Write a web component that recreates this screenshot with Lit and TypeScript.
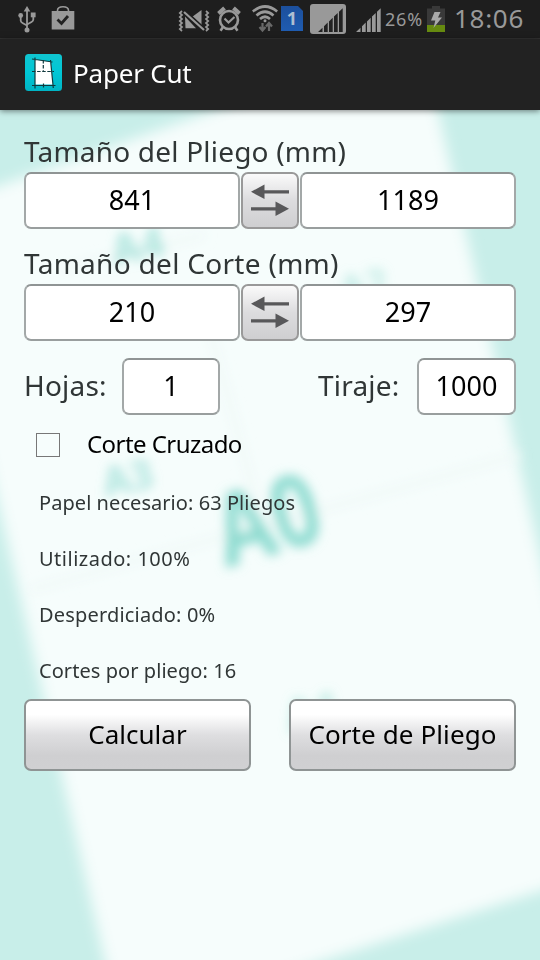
import { LitElement, html, css, svg } from "lit";
import { customElement, state } from "lit/decorators.js";

const usb = svg`<svg width="18" height="28" viewBox="0 0 18 28" fill="#9a9a9a" stroke="#9a9a9a" stroke-width="1.8">
  <path d="M9 0l3.300 5.500H5.700z" stroke="none"/><path d="M9 4v20M2.700 11v3.500Q2.700 16 4.500 17L9 19.500M15.300 10v3.500Q15.300 15 13.500 16L9 18.500" fill="none"/>
  <circle cx="9" cy="24" r="2.500" stroke="none"/><circle cx="2.700" cy="9.500" r="2.400" stroke="none"/><rect x="12.800" y="6.500" width="4.800" height="4.800" stroke="none"/></svg>`;
const bag = svg`<svg width="24" height="26" viewBox="0 0 24 26"><path d="M6.500 6.500V4.500q0-3.700 5.500-3.700t5.500 3.700v2" fill="none" stroke="#999" stroke-width="1.600"/>
  <path d="M.7 5h22.600v18.500H.7z" fill="#999"/><path d="M6.500 13.500l4 4 6.500-7.500" fill="none" stroke="#222" stroke-width="2.800"/></svg>`;
const vibrate = svg`<svg width="32" height="24" viewBox="0 0 32 24" fill="#999"><path d="M7 7.500L18 19.300H7.500z"/><path d="M14 8l9.500-7v15.500z"/><path d="M7 1.500l20 18.500" stroke="#1e1e1e" stroke-width="2"/><path d="M6 3l20 18" fill="none" stroke="#999" stroke-width="2.200"/>
  <path d="M4 2l-2.200 2 2.200 2-2.200 2L4 10l-2.200 2L4 14l-2.200 2L4 18l-2.200 2L4 22M28 2l2.200 2L28 6l2.200 2-2.200 2 2.200 2-2.200 2 2.200 2-2.200 2 2.200 2-2.200 2" fill="none" stroke="#999" stroke-width="1.700"/></svg>`;
const alarm = svg`<svg width="24" height="26" viewBox="0 0 24 26" fill="none" stroke="#999"><circle cx="12" cy="14" r="9" stroke-width="2.600"/><path d="M7.500 12.500l4 4 6-5.500" stroke-width="2.200"/>
  <path d="M1.500 7.500L7.500 2M22.500 7.500L16.500 2" stroke-width="4"/><path d="M6 21l-2.500 3.700M18 21l2.500 3.700" stroke-width="2.500"/></svg>`;
const wifi = svg`<svg width="26" height="28" viewBox="0 0 26 28" fill="none" stroke="#999" stroke-width="2.700"><path d="M.8 6.500Q13-3.500 25.200 6.500M4.500 10.500Q13 3 21.500 10.500M8 14Q13 9.500 18 14"/><circle cx="13" cy="15.800" r="1.500" fill="#999" stroke="none"/>
  <path d="M10.500 18v7M7.500 22l3 3.500 3-3.500M17 26v-7M14 21.500l3-3.500 3 3.500" stroke="#696969" stroke-width="2.200"/></svg>`;
const bars = (c: string) => svg`<svg width="25" height="24" viewBox="0 0 25 24" fill=${c}>
  <path d="M0 24l4.500-4.300V24zM6 24v-5.800l3.700-3.600V24zM11 24V13.400l3.700-3.600V24zM16 24V8.600l3.700-3.600V24zM21 24V3.800L24.700.2V24z"/></svg>`;
const battery = svg`<svg width="18" height="26" viewBox="0 0 18 26"><path d="M5 0h8v2.500h5V26H0V2.500h5z" fill="#393939"/><path d="M0 19h18v7H0z" fill="#668a10"/><path d="M7.500 6h6l-2.500 5.500h4L6.500 22l1.800-7.500H4z" fill="#aaa"/></svg>`;
const logo = svg`<svg width="37" height="37" viewBox="0 0 37 37"><defs><linearGradient id="cy" x2="0" y2="1"><stop offset="0" stop-color="#10c5d0"/><stop offset=".5" stop-color="#00c7d6"/><stop offset="1" stop-color="#00b4c4"/></linearGradient></defs>
  <rect width="37" height="37" rx="3.500" fill="url(#cy)"/><path d="M10 5.500L25.800 7.800 28 30.500H10z" fill="#fff"/>
  <g stroke="#10383d" stroke-width="1.200" fill="none"><path d="M7 5l20.500 3M10 3.500v31M25.500 6l2.800 28M7 31.500h23.500M18.500 29.500v4"/><path d="M7 17.500h22M18.300 6v11" stroke-dasharray="3.500 1.600"/></g></svg>`;
const arrows = svg`<svg width="38" height="34" viewBox="0 0 38 34" fill="#58585a"><path d="M0 8.800L13.500 1.500v5.700H38v3.200H13.500V16zM38 25.800L24.500 18.500v5.700H0v3.200h24.500V33z"/></svg>`;

@customElement("paper-backdrop")
class PaperBackdrop extends LitElement {
  static styles = css`
    :host { display: block; }
    svg { display: block; }
    text { font-family: "Noto Sans", sans-serif; font-weight: 700; fill: #8edbd0; }
  `;
  render() {
    return html`<svg width="540" height="850" viewBox="0 110 540 850">
      <defs>
        <filter id="soft" x="-10%" y="-10%" width="120%" height="120%"><feGaussianBlur stdDeviation="7"/></filter>
        <filter id="ink" x="-40%" y="-40%" width="180%" height="180%"><feGaussianBlur stdDeviation="5.500"/></filter>
      </defs>
      <rect y="110" width="540" height="850" fill="#c8eee9"/>
      <path filter="url(#soft)" fill="#f6fdfc" d="M-70 210L421 38 612 868 120 1026z"/>
      <g filter="url(#ink)">
        <path d="M30 590L520 455M210 330L260 515M60 270L205 235" stroke="#f0f9f8" stroke-width="7" fill="none"/>
        <text transform="translate(226 568) rotate(-16)" font-size="100" textLength="106" lengthAdjust="spacingAndGlyphs">A0</text>
        <text transform="translate(115 266) rotate(-12)" font-size="42" opacity=".75">A4</text>
        <text transform="translate(106 497) rotate(-12)" font-size="40" opacity=".7">A3</text>
        <text transform="translate(343 304) rotate(-12)" font-size="38" opacity=".5">A2</text>
        <text transform="translate(289 733) rotate(-12)" font-size="44" opacity=".5">A1</text>
      </g>
    </svg>`;
  }
}

@customElement("app-root")
class AppRoot extends LitElement {
  @state() private sizes = [
    { cls: "l1", label: "Tamaño del Pliego (mm)", a: "841", b: "1189" },
    { cls: "l2", label: "Tamaño del Corte (mm)", a: "210", b: "297" },
  ];
  @state() private results = ["Papel necesario: 63 Pliegos", "Utilizado: 100%", "Desperdiciado: 0%", "Cortes por pliego: 16"];

  static styles = css`
    :host { display: flex; flex-direction: column; width: 540px; height: 960px; overflow: hidden; font-family: "Noto Sans", sans-serif; color: #000; }
    * { box-sizing: border-box; }
    svg { display: block; flex: none; }
    .status { height: 39px; flex: none; background: #1e1e1e; border-bottom: 1px solid #333; display: flex; align-items: flex-start; padding: 6px 0 0 18px; color: #999; }
    .status > * { flex: none; }
    .bag { margin-left: 15px; }
    .vib { margin: 3px 0 0 103px; }
    .alarm { margin-left: 7px; }
    .wifi { margin-left: 11px; margin-top: -1px; }
    .sim { width: 22px; height: 25px; margin-left: 3px; background: linear-gradient(#1c4f9c, #1f5cb0); color: #aebfd2; font: 700 18px/25px "Noto Sans", sans-serif; text-align: center; clip-path: polygon(0 0, 17px 0, 100% 5px, 100% 100%, 0 100%); }
    .sig { width: 36px; height: 30px; margin: -2px 0 0 7px; background: #999; border-radius: 3px; padding: 4px 3px 2px 8px; }
    .sig2 { margin: 2px 0 0 10px; }
    .pct { margin-left: 4px; width: 40px; font-size: 18px; line-height: 26px; white-space: nowrap; letter-spacing: .8px; }
    .bat { margin: 0 0 0 2px; }
    .clock { margin-left: 9px; font-size: 26px; line-height: 25px; white-space: nowrap; letter-spacing: .7px; }
    .bar { height: 71px; flex: none; background: #222; display: flex; align-items: center; padding-left: 24px; gap: 12px; color: #fff; box-shadow: 0 1px 6px rgba(0,0,0,.5); position: relative; z-index: 2; }
    .bar svg { margin: -4px 0 0 1px; }
    .title { font-size: 26px; line-height: 36px; white-space: nowrap; letter-spacing: -.2px; margin: -3px 0 0 -1px; }
    .body { position: relative; flex: 1; }
    paper-backdrop { position: absolute; inset: 0; }
    .form { position: relative; padding: 22px 24px 0; display: flex; flex-direction: column; }
    .lab { color: #303636; font-size: 28px; line-height: 38px; height: 40px; white-space: nowrap; letter-spacing: .2px; }
    .l2 { letter-spacing: .3px; }
    .pair { display: flex; gap: 1px; height: 57px; margin-bottom: 15px; }
    .field { height: 57px; border: 2px solid #999; border-color: #8f9494 #a3a8a8 #999e9e; border-radius: 7px; background: #fff; font-size: 27px; line-height: 51px; text-align: center; }
    .pair .field { width: 216px; flex: none; }
    .swap { width: 58px; height: 57px; flex: none; border: 2px solid #999; border-radius: 7px; background: linear-gradient(#fafafa, #dcdcde 50%, #cfcfd1); display: grid; place-items: center; padding: 0 0 1px; }
    .counts { display: flex; align-items: center; margin-top: 2px; height: 57px; }
    .counts .lab { height: 42px; }
    .hojas { width: 98px; }
    .tiraje { width: 94px; margin-left: 98px; }
    .counts .small { width: 98px; }
    .counts .run { width: 99px; margin-left: 5px; }
    .check { display: flex; align-items: center; gap: 27px; margin: 10px 0 0 12px; height: 40px; }
    .box { width: 24px; height: 24px; border: 1px solid #777; }
    .cap { font-size: 24px; line-height: 40px; margin-top: -2px; white-space: nowrap; letter-spacing: -.55px; }
    .results { padding-left: 15px; margin-top: 10px; }
    .res { height: 56px; line-height: 56px; font-size: 20px; color: #303636; white-space: nowrap; letter-spacing: .06px; }
    .r1 { letter-spacing: .5px; }
    .r2 { letter-spacing: .18px; }
    .actions { display: flex; justify-content: space-between; }
    .btn { width: 227px; height: 72px; border: 2px solid #8f9494; border-radius: 7px; background: linear-gradient(#fff 20%, #dedee0 50%, #cfcfd1 80%, #d0d0d2); font-size: 26px; line-height: 67px; text-align: center; white-space: nowrap; }
    .cut { letter-spacing: .1px; }
  `;

  render() {
    return html`
      <div class="status">
        ${usb}<div class="bag">${bag}</div><div class="vib">${vibrate}</div><div class="alarm">${alarm}</div><div class="wifi">${wifi}</div>
        <div class="sim">1</div><div class="sig">${bars("#222")}</div><div class="sig2">${bars("#999")}</div>
        <div class="pct">26%</div><div class="bat">${battery}</div><div class="clock">18:06</div>
      </div>
      <div class="bar">${logo}<div class="title">Paper Cut</div></div>
      <div class="body">
        <paper-backdrop></paper-backdrop>
        <div class="form">
          ${this.sizes.map((s) => html`
            <div class="lab ${s.cls}">${s.label}</div>
            <div class="pair"><div class="field">${s.a}</div><div class="swap">${arrows}</div><div class="field">${s.b}</div></div>`)}
          <div class="counts">
            <div class="lab hojas">Hojas:</div><div class="field small">1</div>
            <div class="lab tiraje">Tiraje:</div><div class="field run">1000</div>
          </div>
          <div class="check"><div class="box"></div><div class="cap">Corte Cruzado</div></div>
          <div class="results">${this.results.map((r, i) => html`<div class="res r${i}">${r}</div>`)}</div>
          <div class="actions"><div class="btn calc">Calcular</div><div class="btn cut">Corte de Pliego</div></div>
        </div>
      </div>`;
  }
}
